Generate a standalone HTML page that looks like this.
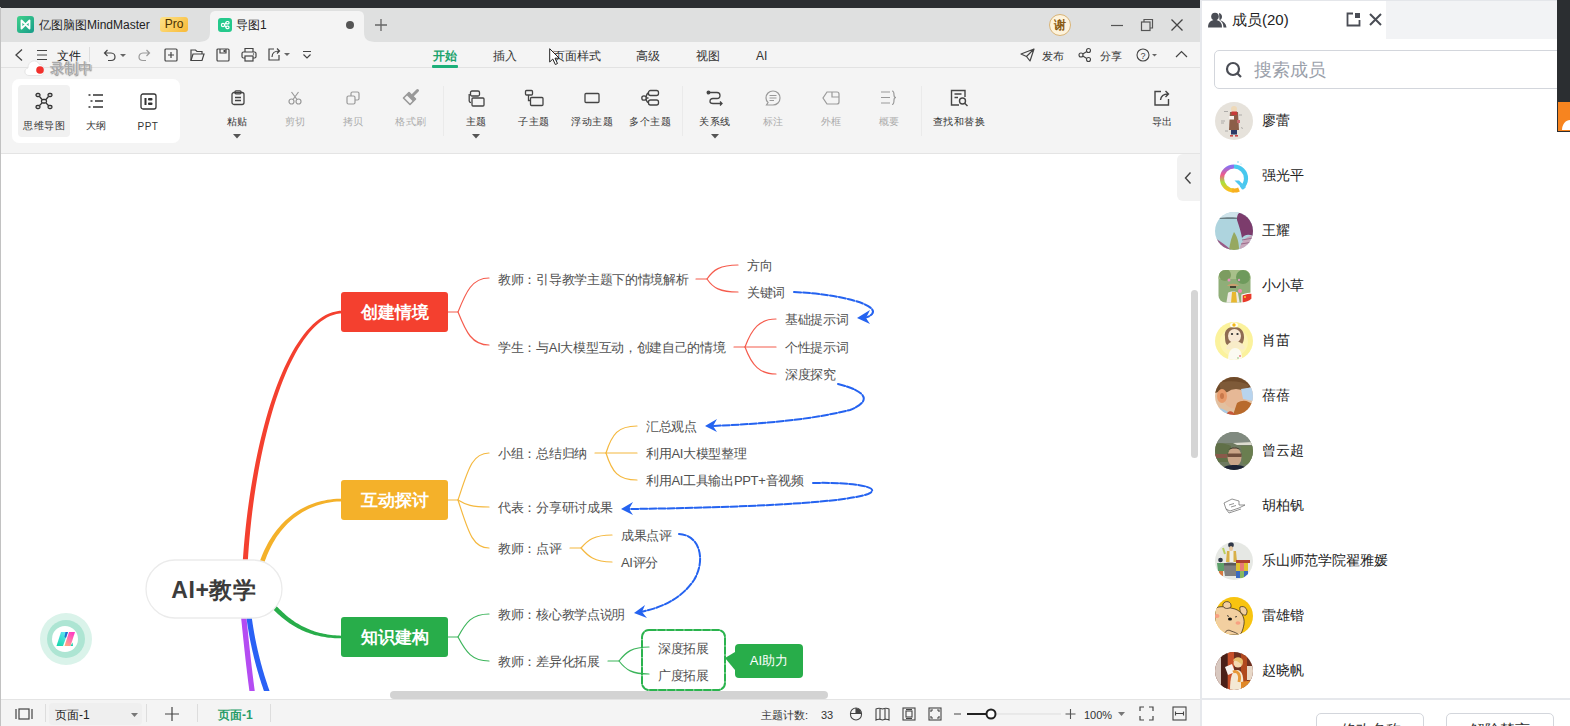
<!DOCTYPE html>
<html><head><meta charset="utf-8">
<style>
*{margin:0;padding:0;box-sizing:border-box}
html,body{width:1570px;height:726px;overflow:hidden;background:#fff;font-family:"Liberation Sans",sans-serif;color:#333}
.a{position:absolute;white-space:nowrap}
svg{position:absolute;overflow:visible}
#topbar{left:0;top:0;width:1200px;height:8px;background:#2b2e31}
#tabbar{left:0;top:8px;width:1200px;height:34px;background:#dfe0e0}
#tool1{left:0;top:42px;width:1200px;height:25px;background:#f4f4f4}
#ribbon{left:0;top:67px;width:1200px;height:86px;background:#f4f4f4;border-top:1px solid #e2e2e2}
#canvas{left:0;top:153px;width:1200px;height:546px;background:#fff;border-top:1px solid #e4e4e4}
#status{left:0;top:699px;width:1200px;height:27px;background:#f4f4f4;border-top:1px solid #e4e4e4}
#leftline{left:0;top:7px;width:1px;height:719px;background:#c2c2c2}
#panel{left:1200px;top:0;width:357px;height:726px;background:#fff;border-left:2px solid #e6e8ec}
.t12{font-size:12px}
.t11{font-size:11px}
.lbl{font-size:10px;letter-spacing:0.5px;color:#333;text-align:center;width:80px;margin-left:-40px}
.dis{color:#aaa}
.node{font-size:13px;letter-spacing:-0.3px;color:#505050}
.mem{font-size:14px;color:#222}
.av{width:38px;height:38px;border-radius:50%}
</style></head><body>
<div id="topbar" class="a"></div>
<div id="tabbar" class="a"></div>
<div id="tool1" class="a"></div>
<div id="ribbon" class="a"></div>
<div id="canvas" class="a"></div>

<svg id="mm" style="left:0;top:0" width="1200" height="690" viewBox="0 0 1200 690">
<defs><clipPath id="cc"><rect x="2" y="154" width="1188" height="537"/></clipPath></defs>
<g clip-path="url(#cc)" fill="none" stroke-linecap="round">
<!-- main branches -->
<path d="M246.60,589.07 L246.87,580.42 L247.23,571.77 L247.68,563.14 L248.22,554.53 L248.85,545.95 L249.57,537.41 L250.38,528.92 L251.27,520.49 L252.25,512.11 L253.31,503.81 L254.45,495.58 L255.67,487.44 L256.97,479.38 L258.35,471.43 L259.81,463.58 L261.34,455.85 L262.95,448.24 L264.64,440.76 L266.39,433.41 L268.22,426.21 L270.12,419.16 L272.09,412.27 L274.12,405.54 L276.22,398.99 L278.39,392.63 L280.62,386.45 L282.92,380.46 L285.28,374.69 L287.69,369.12 L290.17,363.77 L292.70,358.65 L295.29,353.77 L297.94,349.12 L300.63,344.73 L303.38,340.59 L306.18,336.72 L309.03,333.12 L311.92,329.80 L314.85,326.76 L317.83,324.02 L320.85,321.57 L323.90,319.44 L326.99,317.61 L330.12,316.09 L333.28,314.90 L336.48,314.03 L339.72,313.50 L343.00,313.30 L343.00,310.70 L339.44,310.86 L335.93,311.38 L332.45,312.27 L329.03,313.50 L325.65,315.07 L322.33,316.97 L319.07,319.18 L315.86,321.71 L312.71,324.54 L309.62,327.66 L306.58,331.07 L303.60,334.75 L300.68,338.70 L297.81,342.91 L295.01,347.37 L292.26,352.08 L289.58,357.03 L286.95,362.21 L284.39,367.62 L281.89,373.24 L279.45,379.08 L277.08,385.11 L274.77,391.34 L272.53,397.76 L270.35,404.35 L268.24,411.12 L266.21,418.06 L264.24,425.15 L262.35,432.40 L260.52,439.79 L258.78,447.31 L257.10,454.97 L255.50,462.74 L253.98,470.63 L252.54,478.63 L251.18,486.72 L249.89,494.91 L248.69,503.18 L247.57,511.53 L246.53,519.95 L245.58,528.43 L244.72,536.96 L243.94,545.55 L243.25,554.17 L242.65,562.83 L242.14,571.51 L241.73,580.21 L241.40,588.93 Z" fill="#f4402f" stroke="none"/>
<path d="M258.58,589.32 L258.95,586.32 L259.39,583.34 L259.88,580.39 L260.44,577.47 L261.05,574.58 L261.73,571.72 L262.47,568.89 L263.26,566.10 L264.12,563.34 L265.04,560.62 L266.02,557.94 L267.05,555.30 L268.15,552.70 L269.30,550.15 L270.52,547.65 L271.79,545.19 L273.12,542.78 L274.51,540.42 L275.96,538.12 L277.46,535.87 L279.03,533.67 L280.65,531.53 L282.33,529.45 L284.07,527.44 L285.86,525.48 L287.72,523.59 L289.63,521.76 L291.60,520.00 L293.62,518.30 L295.70,516.68 L297.84,515.13 L300.04,513.65 L302.29,512.25 L304.60,510.92 L306.97,509.67 L309.40,508.50 L311.88,507.41 L314.42,506.40 L317.02,505.48 L319.68,504.65 L322.39,503.90 L325.16,503.25 L327.99,502.68 L330.88,502.21 L333.82,501.84 L336.82,501.56 L339.88,501.38 L343.00,501.30 L343.00,498.70 L339.80,498.73 L336.64,498.85 L333.55,499.09 L330.50,499.42 L327.51,499.85 L324.57,500.38 L321.68,501.01 L318.85,501.73 L316.07,502.55 L313.35,503.45 L310.68,504.45 L308.07,505.53 L305.51,506.70 L303.01,507.96 L300.57,509.30 L298.18,510.72 L295.85,512.22 L293.58,513.80 L291.37,515.46 L289.21,517.19 L287.12,518.99 L285.08,520.86 L283.10,522.80 L281.18,524.81 L279.32,526.89 L277.52,529.03 L275.78,531.23 L274.10,533.49 L272.48,535.81 L270.92,538.19 L269.43,540.62 L267.99,543.11 L266.61,545.64 L265.30,548.23 L264.05,550.86 L262.85,553.54 L261.72,556.27 L260.66,559.04 L259.65,561.84 L258.71,564.69 L257.83,567.58 L257.01,570.50 L256.25,573.45 L255.56,576.44 L254.93,579.46 L254.36,582.51 L253.86,585.58 L253.42,588.68 Z" fill="#f4b12a" stroke="none"/>
<path d="M259.89,593.52 L261.37,595.51 L262.86,597.44 L264.36,599.33 L265.86,601.18 L267.37,602.97 L268.89,604.71 L270.41,606.41 L271.94,608.06 L273.48,609.66 L275.03,611.22 L276.59,612.73 L278.16,614.19 L279.74,615.61 L281.33,616.98 L282.93,618.30 L284.54,619.58 L286.15,620.81 L287.79,622.00 L289.43,623.15 L291.08,624.25 L292.75,625.30 L294.42,626.32 L296.11,627.29 L297.81,628.21 L299.53,629.09 L301.26,629.93 L303.00,630.73 L304.75,631.48 L306.52,632.20 L308.30,632.87 L310.09,633.50 L311.90,634.09 L313.73,634.64 L315.56,635.15 L317.42,635.62 L319.29,636.05 L321.17,636.44 L323.07,636.80 L324.99,637.11 L326.92,637.39 L328.87,637.63 L330.83,637.83 L332.81,638.00 L334.82,638.13 L336.83,638.23 L338.87,638.29 L340.93,638.31 L343.00,638.30 L343.00,635.70 L340.97,635.66 L338.96,635.58 L336.98,635.47 L335.01,635.32 L333.07,635.14 L331.14,634.92 L329.24,634.67 L327.36,634.39 L325.50,634.07 L323.66,633.71 L321.83,633.32 L320.03,632.89 L318.24,632.42 L316.47,631.92 L314.72,631.38 L312.99,630.80 L311.27,630.18 L309.57,629.53 L307.88,628.84 L306.22,628.11 L304.56,627.34 L302.92,626.53 L301.30,625.68 L299.69,624.79 L298.09,623.86 L296.50,622.89 L294.93,621.88 L293.37,620.83 L291.82,619.73 L290.28,618.60 L288.76,617.42 L287.24,616.20 L285.74,614.93 L284.24,613.62 L282.75,612.27 L281.28,610.87 L279.81,609.43 L278.35,607.94 L276.89,606.41 L275.45,604.83 L274.01,603.20 L272.58,601.53 L271.15,599.81 L269.73,598.04 L268.32,596.22 L266.91,594.36 L265.51,592.45 L264.11,590.48 Z" fill="#28ad4a" stroke="none"/>
<path d="M239.36,600.26 L239.61,602.75 L239.86,605.21 L240.10,607.65 L240.34,610.06 L240.58,612.46 L240.82,614.83 L241.06,617.17 L241.29,619.50 L241.53,621.81 L241.76,624.10 L241.99,626.37 L242.22,628.63 L242.45,630.87 L242.68,633.09 L242.91,635.30 L243.14,637.50 L243.37,639.68 L243.60,641.85 L243.83,644.01 L244.06,646.16 L244.29,648.30 L244.52,650.43 L244.76,652.55 L244.99,654.67 L245.23,656.78 L245.46,658.88 L245.70,660.98 L245.94,663.07 L246.18,665.16 L246.43,667.25 L246.68,669.34 L246.92,671.43 L247.18,673.51 L247.43,675.60 L247.69,677.69 L247.95,679.78 L248.21,681.88 L248.48,683.98 L248.75,686.08 L249.03,688.19 L249.30,690.31 L249.59,692.43 L249.87,694.56 L250.16,696.70 L250.46,698.86 L250.76,701.02 L251.07,703.19 L251.38,705.37 L256.62,704.63 L256.31,702.45 L256.01,700.28 L255.71,698.13 L255.42,695.99 L255.13,693.85 L254.84,691.73 L254.56,689.61 L254.28,687.50 L254.01,685.40 L253.74,683.30 L253.47,681.21 L253.21,679.12 L252.95,677.04 L252.69,674.96 L252.44,672.88 L252.19,670.80 L251.94,668.72 L251.69,666.63 L251.45,664.55 L251.21,662.47 L250.97,660.38 L250.73,658.28 L250.49,656.19 L250.26,654.08 L250.03,651.97 L249.79,649.85 L249.56,647.73 L249.33,645.59 L249.10,643.45 L248.87,641.29 L248.64,639.13 L248.41,636.95 L248.18,634.75 L247.96,632.55 L247.73,630.33 L247.50,628.09 L247.26,625.84 L247.03,623.57 L246.80,621.28 L246.57,618.97 L246.33,616.64 L246.10,614.30 L245.86,611.93 L245.62,609.54 L245.38,607.12 L245.13,604.69 L244.89,602.22 L244.64,599.74 Z" fill="#b44cf2" stroke="none"/>
<path d="M244.36,600.26 L244.62,602.77 L244.89,605.25 L245.16,607.71 L245.45,610.16 L245.75,612.58 L246.06,614.99 L246.38,617.38 L246.71,619.75 L247.06,622.10 L247.41,624.44 L247.78,626.77 L248.15,629.07 L248.54,631.37 L248.94,633.65 L249.35,635.91 L249.77,638.16 L250.20,640.40 L250.64,642.63 L251.10,644.84 L251.56,647.04 L252.04,649.23 L252.53,651.41 L253.04,653.58 L253.55,655.75 L254.07,657.90 L254.61,660.04 L255.16,662.18 L255.72,664.30 L256.29,666.42 L256.88,668.54 L257.48,670.64 L258.09,672.75 L258.71,674.84 L259.34,676.93 L259.99,679.02 L260.65,681.10 L261.32,683.18 L262.00,685.26 L262.70,687.33 L263.41,689.41 L264.13,691.48 L264.86,693.55 L265.61,695.62 L266.37,697.69 L267.14,699.75 L267.93,701.83 L268.72,703.90 L269.53,705.97 L274.47,704.03 L273.66,701.98 L272.88,699.93 L272.10,697.89 L271.34,695.85 L270.59,693.80 L269.85,691.76 L269.13,689.72 L268.42,687.68 L267.72,685.63 L267.03,683.59 L266.36,681.54 L265.70,679.49 L265.05,677.44 L264.41,675.38 L263.79,673.32 L263.17,671.25 L262.57,669.18 L261.98,667.11 L261.41,665.03 L260.84,662.94 L260.29,660.84 L259.75,658.74 L259.22,656.62 L258.70,654.50 L258.20,652.37 L257.70,650.24 L257.22,648.09 L256.75,645.93 L256.29,643.76 L255.84,641.57 L255.40,639.38 L254.97,637.17 L254.56,634.95 L254.15,632.72 L253.76,630.47 L253.38,628.21 L253.01,625.93 L252.65,623.64 L252.30,621.33 L251.96,619.00 L251.63,616.66 L251.32,614.30 L251.01,611.92 L250.71,609.52 L250.43,607.10 L250.15,604.67 L249.89,602.21 L249.64,599.74 Z" fill="#2a61f5" stroke="none"/>
<!-- red subbranches -->
<g stroke="#f4402f" stroke-width="1.2" opacity="0.85">
<path d="M447,312 L458,312 C466,292 472,278 489,278"/>
<path d="M458,312 C466,332 472,345 489,345"/>
<path d="M696,279 L707,279 C713,270 720,265 738,265"/>
<path d="M707,279 C713,288 720,292 738,292"/>
<path d="M734,347 L745,347 C752,328 760,319 776,319"/>
<path d="M745,347 L776,347"/>
<path d="M745,347 C752,366 760,374 776,374"/>
</g>
<g stroke="#f4b12a" stroke-width="1.2" opacity="0.9">
<path d="M447,500 L458,500 C468,470 472,453 489,453"/>
<path d="M458,500 C466,505 472,507 489,507"/>
<path d="M458,500 C468,530 472,548 489,548"/>
<path d="M595,453 L606,453 C612,434 618,426 637,426"/>
<path d="M606,453 L637,453"/>
<path d="M606,453 C612,472 618,480 637,480"/>
<path d="M570,548 L581,548 C588,540 594,535 612,535"/>
<path d="M581,548 C588,556 594,562 612,562"/>
</g>
<g stroke="#28ad4a" stroke-width="1.2" opacity="0.9">
<path d="M447,637 L458,637 C466,622 472,614 489,614"/>
<path d="M458,637 C466,652 472,661 489,661"/>
<path d="M608,661 L619,661 C626,652 632,647 649,647"/>
<path d="M619,661 C626,670 632,674 649,674"/>
</g>
<!-- boundary -->
<rect x="642" y="630" width="83" height="60" rx="7" stroke="#2bb34e" stroke-width="2" stroke-dasharray="7,2"/>
<!-- relationship lines -->
<g stroke="#2563f0" stroke-width="2" stroke-dasharray="7,2">
<path d="M794,292 C840,294 880,305 872,314 C868,318 864,318 862,318"/>
<path d="M838,384 C870,392 870,402 850,410 C810,420 760,424 712,426"/>
<path d="M813,483 C852,482 884,487 868,494 C840,504 720,508 628,509"/>
<path d="M679,534 C700,535 706,560 694,580 C682,598 662,608 640,612"/>
</g>
<g fill="#2563f0" stroke="none">
<path d="M857,318 L870,310 L866,318 L870,324 Z"/>
<path d="M705,426 L717,419 L713,426 L717,432 Z"/>
<path d="M621,509 L633,502 L629,509 L633,515 Z"/>
<path d="M634,613 L645,605 L642,612 L647,618 Z"/>
</g>
</g>
<!-- nodes -->
<rect x="146" y="560" width="136" height="58" rx="29" fill="#fff" stroke="#ebebeb" stroke-width="1.3"/>
<rect x="341" y="292" width="107" height="40" rx="3" fill="#f4402f"/>
<rect x="341" y="480" width="107" height="40" rx="3" fill="#f4b12a"/>
<rect x="341" y="617" width="107" height="40" rx="3" fill="#28ad4a"/>
<path d="M725,658 L735,652 L735,670 Z" fill="#28ad4a"/>
<rect x="735" y="644" width="68" height="34" rx="4" fill="#28ad4a"/>
</svg>
<div class="a" style="left:171.28px;width:85.42px;margin-left:0;text-align:justify;text-align-last:justify;top:576px;font-size:23px;letter-spacing:0.6px;font-weight:bold;color:#3c3c3c;line-height:28px">AI+教学</div>
<div class="a" style="left:360.50px;width:67.98px;margin-left:0;text-align:justify;text-align-last:justify;top:300px;font-size:17px;font-weight:bold;color:#fff;line-height:26px">创建情境</div>
<div class="a" style="left:360.50px;width:67.98px;margin-left:0;text-align:justify;text-align-last:justify;top:488px;font-size:17px;font-weight:bold;color:#fff;line-height:26px">互动探讨</div>
<div class="a" style="left:360.50px;width:67.98px;margin-left:0;text-align:justify;text-align-last:justify;top:625px;font-size:17px;font-weight:bold;color:#fff;line-height:26px">知识建构</div>
<div class="a" style="left:749.84px;width:38.28px;margin-left:0;text-align:justify;text-align-last:justify;top:651px;font-size:13px;color:#fff;line-height:20px">AI助力</div>
<div class="a node" style="left:498.00px;width:190.50px;margin-left:0;text-align:justify;text-align-last:justify;top:271px">教师：引导教学主题下的情境解析</div>
<div class="a node" style="left:498.00px;width:227.57px;margin-left:0;text-align:justify;text-align-last:justify;top:339px">学生：与AI大模型互动，创建自己的情境</div>
<div class="a node" style="left:747.00px;width:25.39px;margin-left:0;text-align:justify;text-align-last:justify;top:257px">方向</div>
<div class="a node" style="left:747.00px;width:38.09px;margin-left:0;text-align:justify;text-align-last:justify;top:284px">关键词</div>
<div class="a node" style="left:785.00px;width:63.50px;margin-left:0;text-align:justify;text-align-last:justify;top:311px">基础提示词</div>
<div class="a node" style="left:785.00px;width:63.50px;margin-left:0;text-align:justify;text-align-last:justify;top:339px">个性提示词</div>
<div class="a node" style="left:785.00px;width:50.79px;margin-left:0;text-align:justify;text-align-last:justify;top:366px">深度探究</div>
<div class="a node" style="left:498.00px;width:88.89px;margin-left:0;text-align:justify;text-align-last:justify;top:445px">小组：总结归纳</div>
<div class="a node" style="left:498.00px;width:114.29px;margin-left:0;text-align:justify;text-align-last:justify;top:499px">代表：分享研讨成果</div>
<div class="a node" style="left:498.00px;width:63.50px;margin-left:0;text-align:justify;text-align-last:justify;top:540px">教师：点评</div>
<div class="a node" style="left:646.00px;width:50.79px;margin-left:0;text-align:justify;text-align-last:justify;top:418px">汇总观点</div>
<div class="a node" style="left:646.00px;width:100.57px;margin-left:0;text-align:justify;text-align-last:justify;top:445px">利用AI大模型整理</div>
<div class="a node" style="left:646.00px;width:157.65px;margin-left:0;text-align:justify;text-align-last:justify;top:472px">利用AI工具输出PPT+音视频</div>
<div class="a node" style="left:621.00px;width:50.79px;margin-left:0;text-align:justify;text-align-last:justify;top:527px">成果点评</div>
<div class="a node" style="left:621.00px;width:37.07px;margin-left:0;text-align:justify;text-align-last:justify;top:554px">AI评分</div>
<div class="a node" style="left:498.00px;width:127.00px;margin-left:0;text-align:justify;text-align-last:justify;top:606px">教师：核心教学点说明</div>
<div class="a node" style="left:498.00px;width:101.59px;margin-left:0;text-align:justify;text-align-last:justify;top:653px">教师：差异化拓展</div>
<div class="a node" style="left:658.00px;width:50.79px;margin-left:0;text-align:justify;text-align-last:justify;top:640px">深度拓展</div>
<div class="a node" style="left:658.00px;width:50.79px;margin-left:0;text-align:justify;text-align-last:justify;top:667px">广度拓展</div>
<div id="status" class="a"></div>
<div id="leftline" class="a"></div>
<!-- TAB BAR -->
<div class="a" style="left:17px;top:16px;width:17px;height:17px;border-radius:3px;background:linear-gradient(135deg,#3fd18a,#179c8a)"></div>
<svg style="left:17px;top:16px" width="17" height="17"><path d="M4.5,4.5 L4.5,12.5 L12.5,4.5 L12.5,12.5 Z" fill="none" stroke="#fff" stroke-width="1.8" stroke-linejoin="round"/></svg>
<div class="a" style="left:39.00px;width:110.67px;margin-left:0;text-align:justify;text-align-last:justify;top:17px;font-size:12px;color:#222;line-height:16px">亿图脑图MindMaster</div>
<div class="a" style="left:160px;top:17px;width:28px;height:15px;border-radius:3px;background:linear-gradient(135deg,#fde38a,#f8b936);font-size:12px;color:#4a3000;text-align:center;line-height:15px">Pro</div>
<svg style="left:196px;top:11px" width="187" height="31"><path d="M0,31 C10,31 14,29 14,21 L14,6 C14,2 16,0 20,0 L162,0 C166,0 168,2 168,6 L168,21 C168,29 172,31 182,31 Z" fill="#f4f4f4"/></svg>
<div class="a" style="left:218px;top:18px;width:14px;height:14px;border-radius:3px;background:#25c98c"></div>
<svg style="left:218px;top:18px" width="14" height="14"><g fill="none" stroke="#fff" stroke-width="1.2"><circle cx="5" cy="7" r="1.6"/><rect x="8" y="3.5" width="3" height="2.4" rx="1"/><rect x="8" y="8.2" width="3" height="2.4" rx="1"/><path d="M6.5,7 L8,4.7 M6.5,7 L8,9.4"/></g></svg>
<div class="a" style="left:236.00px;width:30.67px;margin-left:0;text-align:justify;text-align-last:justify;top:17px;font-size:12px;color:#222;line-height:16px">导图1</div>
<div class="a" style="left:346px;top:21px;width:8px;height:8px;border-radius:50%;background:#555"></div>
<svg style="left:374px;top:18px" width="14" height="14"><path d="M7,1 V13 M1,7 H13" stroke="#666" stroke-width="1.3"/></svg>
<div class="a" style="left:1049px;top:14px;width:22px;height:22px;border-radius:50%;background:#fdf3dc;border:1px solid #d9b477;font-size:12px;font-weight:bold;color:#8a5a10;text-align:center;line-height:20px">谢</div>
<svg style="left:1110px;top:18px" width="14" height="14"><path d="M1,7.5 H13" stroke="#555" stroke-width="1.2"/></svg>
<svg style="left:1140px;top:18px" width="14" height="14"><g fill="none" stroke="#555" stroke-width="1.2"><rect x="1.5" y="4" width="8.5" height="8.5"/><path d="M4,4 V1.5 H12.5 V10 H10"/></g></svg>
<svg style="left:1170px;top:18px" width="14" height="14"><path d="M1.5,1.5 L12.5,12.5 M12.5,1.5 L1.5,12.5" stroke="#444" stroke-width="1.3"/></svg>

<!-- TOOLBAR ROW 1 -->
<svg style="left:13px;top:48px" width="12" height="14"><path d="M9,1.5 L3,7 L9,12.5" fill="none" stroke="#444" stroke-width="1.3"/></svg>
<svg style="left:36px;top:49px" width="12" height="12"><path d="M1,1.5 H11 M1,6 H11 M1,10.5 H11" stroke="#444" stroke-width="1.2"/></svg>
<div class="a" style="left:57.00px;width:23.98px;margin-left:0;text-align:justify;text-align-last:justify;top:48px;font-size:12px;color:#222;line-height:16px">文件</div>
<div class="a" style="left:89px;top:47px;width:1px;height:15px;background:#ddd"></div>
<svg style="left:102px;top:48px" width="30" height="14"><path d="M3,5 H9 C12,5 13,7.5 13,9 C13,11 11.5,12.5 9,12.5 H6 M5.5,2 L2.5,5 L5.5,8" fill="none" stroke="#444" stroke-width="1.2"/><path d="M18,6 L24,6 L21,9 Z" fill="#666"/></svg>
<svg style="left:138px;top:48px" width="14" height="14"><path d="M11,5 H5 C2,5 1,7.5 1,9 C1,11 2.5,12.5 5,12.5 H8 M8.5,2 L11.5,5 L8.5,8" fill="none" stroke="#999" stroke-width="1.2"/></svg>
<svg style="left:164px;top:48px" width="14" height="14"><g fill="none" stroke="#444" stroke-width="1.2"><rect x="1" y="1" width="12" height="12" rx="1"/><path d="M7,4 V10 M4,7 H10"/></g></svg>
<svg style="left:190px;top:48px" width="15" height="14"><g fill="none" stroke="#444" stroke-width="1.2"><path d="M1,12.5 V2 H5.5 L7,3.5 H12 V6"/><path d="M1,12.5 L3,6 H14 L12,12.5 Z"/></g></svg>
<svg style="left:216px;top:48px" width="14" height="14"><g fill="none" stroke="#444" stroke-width="1.2"><rect x="1" y="1" width="12" height="12" rx="1"/><path d="M4,1 V5 H10 V1"/></g><rect x="7.5" y="2" width="2" height="2" fill="#444"/></svg>
<svg style="left:241px;top:47px" width="16" height="15"><g fill="none" stroke="#444" stroke-width="1.2"><path d="M4,5 V1.5 H12 V5"/><path d="M4,11 H2.5 C1.5,11 1,10.5 1,9.5 V6.5 C1,5.5 1.5,5 2.5,5 H13.5 C14.5,5 15,5.5 15,6.5 V9.5 C15,10.5 14.5,11 13.5,11 H12"/><rect x="4" y="9" width="8" height="5"/></g><circle cx="12.5" cy="7" r="0.7" fill="#444"/></svg>
<svg style="left:267px;top:47px" width="26" height="15"><g fill="none" stroke="#444" stroke-width="1.2"><path d="M7,2 H2 V13 H12 V8"/><path d="M5,10 C5,6 8,4 12,4 M10,1.5 L12.5,4 L10,6.5"/></g><path d="M17,6 L23,6 L20,9 Z" fill="#666"/></svg>
<svg style="left:301px;top:49px" width="12" height="12"><path d="M2,2.5 H10 M2.5,5.5 L6,9 L9.5,5.5" fill="none" stroke="#444" stroke-width="1.2"/></svg>
<div class="a" style="left:433.00px;width:23.98px;margin-left:0;text-align:justify;text-align-last:justify;top:48px;font-size:12px;color:#1aa36c;font-weight:bold;line-height:16px">开始</div>
<div class="a" style="left:432px;top:65px;width:26px;height:3px;border-radius:1px;background:#1db07a"></div>
<div class="a" style="left:493.00px;width:23.98px;margin-left:0;text-align:justify;text-align-last:justify;top:48px;font-size:12px;color:#333;line-height:16px">插入</div>
<div class="a" style="left:553.00px;width:47.98px;margin-left:0;text-align:justify;text-align-last:justify;top:48px;font-size:12px;color:#333;line-height:16px">页面样式</div>
<svg style="left:549px;top:48px" width="12" height="19"><path d="M0.7,0.7 L0.7,14 L3.8,11 L6.3,16.5 L8.5,15.5 L6,10.2 L10.2,10.2 Z" fill="#fff" stroke="#222" stroke-width="1" stroke-linejoin="round"/></svg>
<div class="a" style="left:636.00px;width:23.98px;margin-left:0;text-align:justify;text-align-last:justify;top:48px;font-size:12px;color:#333;line-height:16px">高级</div>
<div class="a" style="left:696.00px;width:23.98px;margin-left:0;text-align:justify;text-align-last:justify;top:48px;font-size:12px;color:#333;line-height:16px">视图</div>
<div class="a" style="left:756px;top:48px;font-size:12px;color:#333;line-height:16px">AI</div>
<svg style="left:1020px;top:48px" width="15" height="14"><path d="M1,6 L14,1 L10,13 L6.5,8.5 Z M6.5,8.5 L14,1" fill="none" stroke="#444" stroke-width="1.2" stroke-linejoin="round"/></svg>
<div class="a" style="left:1042.00px;width:21.98px;margin-left:0;text-align:justify;text-align-last:justify;top:48px;font-size:11px;color:#333;line-height:16px">发布</div>
<svg style="left:1078px;top:48px" width="14" height="14"><g fill="none" stroke="#444" stroke-width="1.1"><circle cx="3" cy="7" r="2"/><circle cx="10.5" cy="2.5" r="2"/><circle cx="10.5" cy="11.5" r="2"/><path d="M4.8,6 L8.8,3.5 M4.8,8 L8.8,10.5"/></g></svg>
<div class="a" style="left:1100.00px;width:21.98px;margin-left:0;text-align:justify;text-align-last:justify;top:48px;font-size:11px;color:#333;line-height:16px">分享</div>
<svg style="left:1136px;top:48px" width="26" height="14"><circle cx="7" cy="7" r="6" fill="none" stroke="#444" stroke-width="1.1"/><text x="7" y="10.5" font-size="9" text-anchor="middle" fill="#444" font-family="Liberation Sans">?</text><path d="M16,6 L21,6 L18.5,8.5 Z" fill="#666"/></svg>
<svg style="left:1175px;top:49px" width="13" height="10"><path d="M1,8 L6.5,2.5 L12,8" fill="none" stroke="#444" stroke-width="1.2"/></svg>


<!-- RIBBON -->
<div class="a" style="left:12px;top:79px;width:168px;height:64px;border-radius:7px;background:#fff"></div>
<div class="a" style="left:18px;top:85px;width:52px;height:52px;border-radius:4px;background:#f1f1f1"></div>
<svg style="left:35px;top:92px" width="18" height="18"><g fill="none" stroke="#333" stroke-width="1.3"><rect x="1" y="1.5" width="4" height="3" rx="1.5"/><rect x="13" y="1.5" width="4" height="3" rx="1.5"/><rect x="1" y="13.5" width="4" height="3" rx="1.5"/><rect x="13" y="13.5" width="4" height="3" rx="1.5"/><rect x="6.5" y="7.5" width="5" height="3.5" rx="1.5"/><path d="M4.5,4.5 L7,7.5 M13.5,4.5 L11,7.5 M4.5,13.5 L7,11 M13.5,13.5 L11,11"/></g></svg>
<div class="a lbl" style="left:23.00px;width:41.98px;margin-left:0;text-align:justify;text-align-last:justify;top:119px">思维导图</div>
<svg style="left:88px;top:94px" width="16" height="14"><g stroke="#333" stroke-width="1.3"><path d="M0.5,1 H2.5 M5,1 H15 M2.5,7 H4.5 M7,7 H15 M0.5,13 H2.5 M5,13 H15"/></g></svg>
<div class="a lbl" style="left:85.50px;width:20.98px;margin-left:0;text-align:justify;text-align-last:justify;top:119px">大纲</div>
<svg style="left:140px;top:93px" width="17" height="17"><g fill="none" stroke="#333" stroke-width="1.3"><rect x="1" y="1" width="15" height="15" rx="2"/></g><g fill="#333"><rect x="4.5" y="5" width="2" height="7"/><rect x="8" y="5" width="4.5" height="2.5" rx="1"/><rect x="8" y="9.5" width="4.5" height="2.5" rx="1"/></g></svg>
<div class="a lbl" style="left:148px;top:121px">PPT</div>

<svg style="left:231px;top:90px" width="14" height="15"><g fill="none" stroke="#444" stroke-width="1.3"><rect x="1" y="2.5" width="12" height="12" rx="2"/><rect x="4" y="0.8" width="6" height="3" rx="1"/><path d="M4,7.5 H10 M4,10.5 H10"/></g></svg>
<div class="a lbl" style="left:226.50px;width:20.98px;margin-left:0;text-align:justify;text-align-last:justify;top:115px">粘贴</div>
<svg style="left:233px;top:134px" width="8" height="5"><path d="M0,0 H8 L4,4.5 Z" fill="#555"/></svg>
<svg style="left:288px;top:91px" width="14" height="14"><g fill="none" stroke="#999" stroke-width="1.2"><circle cx="3.5" cy="10.5" r="2.5"/><circle cx="10.5" cy="10.5" r="2.5"/><path d="M5,8.5 L10.5,1 M9,8.5 L3.5,1"/></g></svg>
<div class="a lbl dis" style="left:284.50px;width:20.98px;margin-left:0;text-align:justify;text-align-last:justify;top:115px">剪切</div>
<svg style="left:346px;top:91px" width="14" height="14"><g fill="none" stroke="#999" stroke-width="1.2"><rect x="1" y="5" width="8" height="8" rx="1.5"/><path d="M5,5 V2.5 C5,1.5 5.5,1 6.5,1 H11.5 C12.5,1 13,1.5 13,2.5 V7.5 C13,8.5 12.5,9 11.5,9 H9"/></g></svg>
<div class="a lbl dis" style="left:342.50px;width:20.98px;margin-left:0;text-align:justify;text-align-last:justify;top:115px">拷贝</div>
<svg style="left:402px;top:89px" width="18" height="17"><path d="M1.5,9 L7,3.5 L13.5,10 L8,15.5 Z" fill="none" stroke="#999" stroke-width="1.6" stroke-linejoin="round"/><path d="M4.5,6 L7,3.5 L13.5,10 L11,12.5 Z" fill="#999"/><path d="M10.5,6.5 L15.5,1.5" stroke="#999" stroke-width="3" stroke-linecap="round"/></svg>
<div class="a lbl dis" style="left:395.25px;width:31.48px;margin-left:0;text-align:justify;text-align-last:justify;top:115px">格式刷</div>
<div class="a" style="left:443px;top:86px;width:1px;height:50px;background:#eaeaea"></div>

<svg style="left:468px;top:90px" width="18" height="17"><g fill="none" stroke="#444" stroke-width="1.3"><rect x="2.5" y="1" width="9" height="5" rx="1.5"/><path d="M1.2,4 V11 C1.2,12 1.6,12.5 3,12.5"/><rect x="4" y="8" width="12" height="8" rx="1"/></g></svg>
<div class="a lbl" style="left:465.50px;width:20.98px;margin-left:0;text-align:justify;text-align-last:justify;top:115px">主题</div>
<svg style="left:472px;top:134px" width="8" height="5"><path d="M0,0 H8 L4,4.5 Z" fill="#555"/></svg>
<svg style="left:524px;top:89px" width="20" height="18"><g fill="none" stroke="#444" stroke-width="1.3"><rect x="1.5" y="1.5" width="7" height="4.5" rx="1"/><path d="M4.5,6 V11.5 H6.5"/><rect x="6.5" y="8.5" width="12.5" height="8" rx="1"/></g></svg>
<div class="a lbl" style="left:518.25px;width:31.48px;margin-left:0;text-align:justify;text-align-last:justify;top:115px">子主题</div>
<svg style="left:584px;top:92px" width="16" height="12"><rect x="1" y="1.5" width="14" height="9" rx="1" fill="none" stroke="#444" stroke-width="1.3"/></svg>
<div class="a lbl" style="left:571.00px;width:41.98px;margin-left:0;text-align:justify;text-align-last:justify;top:115px">浮动主题</div>
<svg style="left:640px;top:89px" width="20" height="18"><g fill="none" stroke="#444" stroke-width="1.3"><circle cx="4" cy="9" r="2.2"/><rect x="8.5" y="1.5" width="10" height="5" rx="2"/><rect x="8.5" y="11" width="10" height="5" rx="2"/><path d="M6.2,9 H8.5 M8.5,4 C7,4 6.5,6 6,8 M8.5,13.5 C7,13.5 6.5,12 6,10"/></g></svg>
<div class="a lbl" style="left:629.00px;width:41.98px;margin-left:0;text-align:justify;text-align-last:justify;top:115px">多个主题</div>
<div class="a" style="left:682px;top:86px;width:1px;height:50px;background:#eaeaea"></div>

<svg style="left:706px;top:90px" width="18" height="15"><g fill="none" stroke="#444" stroke-width="1.3"><circle cx="2.5" cy="2.5" r="1.3" fill="#444"/><path d="M2.5,2.5 H11 C13,2.5 14,4 14,5.5 C14,7 13,8.5 11,8.5 H7 C5,8.5 4,10 4,11.5 C4,13 5,13.5 7,13.5 H16 M14,11.5 L16,13.5 L14,15.5"/></g></svg>
<div class="a lbl" style="left:699.25px;width:31.48px;margin-left:0;text-align:justify;text-align-last:justify;top:115px">关系线</div>
<svg style="left:711px;top:134px" width="8" height="5"><path d="M0,0 H8 L4,4.5 Z" fill="#555"/></svg>
<svg style="left:765px;top:90px" width="16" height="16"><g fill="none" stroke="#999" stroke-width="1.2"><path d="M8,1 C12,1 15,4 15,8 C15,12 12,15 8,15 H1.5 L3,12.5 C1.8,11.3 1,9.7 1,8 C1,4 4,1 8,1 Z"/><path d="M4.5,5.5 H11.5 M4.5,8 H11.5 M4.5,10.5 H9"/></g></svg>
<div class="a lbl dis" style="left:762.50px;width:20.98px;margin-left:0;text-align:justify;text-align-last:justify;top:115px">标注</div>
<svg style="left:822px;top:91px" width="18" height="14"><g fill="none" stroke="#999" stroke-width="1.2"><path d="M5,1 H15 C16,1 17,2 17,3 V11 C17,12 16,13 15,13 H5 L1,7 Z"/><path d="M10,1 V6 H17"/></g></svg>
<div class="a lbl dis" style="left:820.50px;width:20.98px;margin-left:0;text-align:justify;text-align-last:justify;top:115px">外框</div>
<svg style="left:880px;top:90px" width="18" height="16"><g fill="none" stroke="#999" stroke-width="1.2"><path d="M1,2 H10 M1,7.5 H10 M1,13 H10 M12,1 C14,1 14,3 14,5 C14,7 15,7.5 16,7.5 C15,7.5 14,8 14,10 C14,12 14,14.5 12,14.5"/></g></svg>
<div class="a lbl dis" style="left:878.50px;width:20.98px;margin-left:0;text-align:justify;text-align-last:justify;top:115px">概要</div>
<div class="a" style="left:921px;top:86px;width:1px;height:50px;background:#eaeaea"></div>

<svg style="left:950px;top:89px" width="19" height="18"><g fill="none" stroke="#444" stroke-width="1.4"><path d="M9,16 H1.5 V1.5 H15 V8"/><path d="M4.5,5 H11.5 M4.5,8.5 H8"/><circle cx="12.5" cy="12" r="3"/><path d="M14.7,14.2 L17.5,17"/></g></svg>
<div class="a lbl" style="left:932.75px;width:52.48px;margin-left:0;text-align:justify;text-align-last:justify;top:115px">查找和替换</div>
<svg style="left:1153px;top:89px" width="18" height="17"><g fill="none" stroke="#444" stroke-width="1.4"><path d="M8,2.5 H2 V16 H15.5 V10"/><path d="M7.5,11 C8,7 10.5,5 15,5 M12.5,2 L15.5,5 L12.5,8"/></g></svg>
<div class="a lbl" style="left:1151.50px;width:20.98px;margin-left:0;text-align:justify;text-align-last:justify;top:115px">导出</div>
<!-- recording overlay -->
<svg style="left:22px;top:56px" width="26" height="22"><path d="M7,19.5 C2,19.5 1.5,13 6,12 C5.5,5 14.5,2 17.5,8.5 C21.5,8.5 23,13 20.5,15.5 C22,18 20.5,19.5 18.5,19.5 Z" fill="#fff" stroke="#e0e0e0" stroke-width="0.8"/><circle cx="18" cy="14" r="3.8" fill="#f2302c"/></svg>
<div class="a" style="left:50.00px;width:41.98px;margin-left:0;text-align:justify;text-align-last:justify;top:60px;font-size:14px;font-weight:bold;color:#a8a8a8;line-height:16px;text-shadow:0 0 1px #fff,0 0 2px #fff,1px 1px 1px #777">录制中</div>

<div id="panel" class="a"></div>

<!-- canvas extras -->
<div class="a" style="left:1177px;top:154px;width:23px;height:47px;background:#f2f2f2;border-radius:6px 0 0 6px"></div>
<svg style="left:1183px;top:171px" width="10" height="14"><path d="M7.5,1.5 L2.5,7 L7.5,12.5" fill="none" stroke="#444" stroke-width="1.4"/></svg>
<div class="a" style="left:1191px;top:290px;width:7px;height:168px;border-radius:4px;background:#d5d5d5"></div>
<div class="a" style="left:390px;top:691px;width:438px;height:8px;border-radius:4px;background:#d3d3d3"></div>
<div class="a" style="left:39.5px;top:612.5px;width:52px;height:52px;border-radius:50%;background:#daf3ea"></div>
<div class="a" style="left:46.5px;top:619.5px;width:38px;height:38px;border-radius:50%;background:#ade5d3"></div>
<div class="a" style="left:52px;top:626px;width:26px;height:26px;border-radius:50%;background:#fff"></div>
<svg style="left:52px;top:626px" width="26" height="26"><defs><linearGradient id="g1" x1="0" y1="1" x2="0.6" y2="0"><stop offset="0" stop-color="#12d6a6"/><stop offset="1" stop-color="#5de3f0"/></linearGradient><linearGradient id="g2" x1="0" y1="1" x2="0.6" y2="0"><stop offset="0" stop-color="#ffb27a"/><stop offset="0.6" stop-color="#ff6fae"/><stop offset="1" stop-color="#ff40c0"/></linearGradient></defs><path d="M4.5,20 L9,6 L16,6 L11,20 Z" fill="url(#g1)"/><path d="M12.5,20 L17,6 L23,6 L18.5,20 Z" fill="url(#g2)"/><path d="M13.5,6 L16,6 L14,12 L12.5,11 Z" fill="#1e6fd0"/><path d="M18.5,20 L20.5,16.5 L21,20 Z" fill="#1ad0b0"/></svg>

<!-- STATUS BAR -->
<svg style="left:15px;top:708px" width="18" height="12"><g fill="none" stroke="#444" stroke-width="1.2"><path d="M1,1 V11 M17,1 V11"/><rect x="4" y="1" width="10" height="10"/></g></svg>
<div class="a" style="left:45px;top:704px;width:1px;height:18px;background:#ddd"></div>
<div class="a" style="left:49px;top:703px;width:93px;height:22px;border-radius:4px;background:#efefef"></div>
<div class="a" style="left:55.00px;width:34.65px;margin-left:0;text-align:justify;text-align-last:justify;top:707px;font-size:12px;color:#222;line-height:16px">页面-1</div>
<svg style="left:131px;top:713px" width="7" height="4"><path d="M0,0 H7 L3.5,4 Z" fill="#777"/></svg>
<div class="a" style="left:146px;top:704px;width:1px;height:18px;background:#ddd"></div>
<svg style="left:165px;top:707px" width="14" height="14"><path d="M7,0 V14 M0,7 H14" stroke="#444" stroke-width="1.2"/></svg>
<div class="a" style="left:197px;top:704px;width:1px;height:18px;background:#ddd"></div>
<div class="a" style="left:218.00px;width:34.65px;margin-left:0;text-align:justify;text-align-last:justify;top:707px;font-size:12px;color:#2a9d6a;font-weight:bold;line-height:16px">页面-1</div>
<div class="a" style="left:270px;top:704px;width:1px;height:18px;background:#ddd"></div>
<div class="a" style="left:761.00px;width:47.04px;margin-left:0;text-align:justify;text-align-last:justify;top:707px;font-size:11px;color:#333;line-height:16px">主题计数:</div>
<div class="a" style="left:821px;top:707px;font-size:11px;color:#333;line-height:16px">33</div>
<svg style="left:849px;top:707px" width="14" height="14"><g fill="none" stroke="#444" stroke-width="1.1"><rect x="1.5" y="1" width="11" height="12" rx="5.5"/><path d="M1.5,6.5 H12.5 M7,1 V6.5"/></g><path d="M7,1.5 C10,1.5 12,3 12,6.5 H7 Z" fill="#444"/></svg>
<svg style="left:875px;top:707px" width="15" height="14"><g fill="none" stroke="#444" stroke-width="1.1"><path d="M1,2 C3,1 5,1 7.5,2 C10,1 12,1 14,2 V13 C12,12 10,12 7.5,13 C5,12 3,12 1,13 Z M5,1.5 V12.5 M10,1.5 V12.5"/></g></svg>
<svg style="left:902px;top:707px" width="14" height="14"><g fill="none" stroke="#444" stroke-width="1.1"><rect x="1" y="1" width="12" height="12"/><rect x="4" y="4" width="6" height="6"/><path d="M4,2.5 H10 M4,11.5 H10"/></g></svg>
<svg style="left:928px;top:707px" width="14" height="14"><g fill="none" stroke="#444" stroke-width="1.1"><rect x="1" y="1" width="12" height="12"/><path d="M3,5 V3 H5 M9,3 H11 V5 M11,9 V11 H9 M5,11 H3 V9"/></g></svg>
<svg style="left:953px;top:707px" width="110" height="14"><path d="M1,7 H8" stroke="#555" stroke-width="1.1"/><path d="M14,7 H34" stroke="#222" stroke-width="2"/><path d="M44,7 H108" stroke="#ddd" stroke-width="1"/><circle cx="38" cy="7" r="4.5" fill="#fff" stroke="#222" stroke-width="2"/></svg>
<svg style="left:1064px;top:707px" width="13" height="14"><path d="M6.5,2 V12 M1.5,7 H11.5" stroke="#555" stroke-width="1.1"/></svg>
<div class="a" style="left:1084px;top:707px;font-size:11px;color:#333;line-height:16px">100%</div>
<svg style="left:1118px;top:712px" width="7" height="5"><path d="M0,0 H7 L3.5,4 Z" fill="#777"/></svg>
<svg style="left:1139px;top:706px" width="15" height="15"><g fill="none" stroke="#444" stroke-width="1.2"><path d="M1,5 V1 H5 M10,1 H14 V5 M14,10 V14 H10 M5,14 H1 V10"/></g></svg>
<svg style="left:1172px;top:706px" width="15" height="15"><g fill="none" stroke="#444" stroke-width="1.1"><rect x="1" y="1" width="13" height="13"/><path d="M3.5,7.5 H11.5 M3.5,5.5 V9.5 M11.5,5.5 V9.5"/></g></svg>

<!-- PANEL -->
<div class="a" style="left:1202px;top:0;width:355px;height:1px;background:#e4e6ea"></div>
<div class="a" style="left:1386px;top:1px;width:171px;height:38px;background:#f2f3f5"></div>
<svg style="left:1208px;top:12px" width="19" height="16"><g fill="#4a4d55"><circle cx="7" cy="4.5" r="3.8"/><path d="M0,15.5 C0,10 3,8 7,8 C11,8 14,10 14,15.5 Z"/><path d="M11,1 C13,1.5 14,3 14,4.8 C14,6.5 13,7.8 11.5,8.3 C15,9 18,11 18.5,15.5 H15.5 C15.3,11 13.5,9.3 11.5,8.3 Z"/></g></svg>
<div class="a" style="left:1232.00px;width:56.67px;margin-left:0;text-align:justify;text-align-last:justify;top:10px;font-size:15px;color:#222;line-height:20px">成员(20)</div>
<svg style="left:1346px;top:12px" width="15" height="15"><g fill="none" stroke="#4a4d55" stroke-width="1.8"><path d="M7,1.5 H1.5 V13.5 H13.5 V8"/></g><rect x="9" y="1" width="5" height="5" fill="#4a4d55"/></svg>
<svg style="left:1368px;top:12px" width="15" height="15"><path d="M2,2 L13,13 M13,2 L2,13" stroke="#4a4d55" stroke-width="2"/></svg>
<div class="a" style="left:1214px;top:50px;width:350px;height:39px;border:1px solid #d3d6dc;border-radius:5px;background:#fff"></div>
<svg style="left:1225px;top:61px" width="18" height="18"><g fill="none" stroke="#4a4d55" stroke-width="2.2"><circle cx="8" cy="8" r="6"/><path d="M12.5,12.5 L16,16"/></g></svg>
<div class="a" style="left:1254.00px;width:71.98px;margin-left:0;text-align:justify;text-align-last:justify;top:59px;font-size:18px;color:#9aa0aa;line-height:22px">搜索成员</div>
<div class="a" style="left:1202px;top:698px;width:368px;height:2px;background:#e6e8ec"></div>
<div class="a" style="left:1316px;top:713px;width:108px;height:30px;border:1px solid #d3d6dc;border-radius:5px;background:#fff"></div>
<div class="a" style="left:1446px;top:713px;width:108px;height:30px;border:1px solid #d3d6dc;border-radius:5px;background:#fff"></div>
<div class="a" style="left:1341.00px;width:59.98px;margin-left:0;text-align:justify;text-align-last:justify;top:721px;font-size:15px;color:#333;line-height:18px">修改名称</div>
<div class="a" style="left:1470.00px;width:59.98px;margin-left:0;text-align:justify;text-align-last:justify;top:721px;font-size:15px;color:#333;line-height:18px">解除禁言</div>
<div class="a mem" style="left:1262.00px;width:27.98px;margin-left:0;text-align:justify;text-align-last:justify;top:111px;line-height:18px">廖蕾</div>
<div class="a mem" style="left:1262.00px;width:41.98px;margin-left:0;text-align:justify;text-align-last:justify;top:166px;line-height:18px">强光平</div>
<div class="a mem" style="left:1262.00px;width:27.98px;margin-left:0;text-align:justify;text-align-last:justify;top:221px;line-height:18px">王耀</div>
<div class="a mem" style="left:1262.00px;width:41.98px;margin-left:0;text-align:justify;text-align-last:justify;top:276px;line-height:18px">小小草</div>
<div class="a mem" style="left:1262.00px;width:27.98px;margin-left:0;text-align:justify;text-align-last:justify;top:331px;line-height:18px">肖苗</div>
<div class="a mem" style="left:1262.00px;width:27.98px;margin-left:0;text-align:justify;text-align-last:justify;top:386px;line-height:18px">蓓蓓</div>
<div class="a mem" style="left:1262.00px;width:41.98px;margin-left:0;text-align:justify;text-align-last:justify;top:441px;line-height:18px">曾云超</div>
<div class="a mem" style="left:1262.00px;width:41.98px;margin-left:0;text-align:justify;text-align-last:justify;top:496px;line-height:18px">胡柏钒</div>
<div class="a mem" style="left:1262.00px;width:125.98px;margin-left:0;text-align:justify;text-align-last:justify;top:551px;line-height:18px">乐山师范学院翟雅媛</div>
<div class="a mem" style="left:1262.00px;width:41.98px;margin-left:0;text-align:justify;text-align-last:justify;top:606px;line-height:18px">雷雄锴</div>
<div class="a mem" style="left:1262.00px;width:41.98px;margin-left:0;text-align:justify;text-align-last:justify;top:661px;line-height:18px">赵晓帆</div>
<svg style="left:1215px;top:102px" width="38" height="38" viewBox="0 0 38 38"><defs><clipPath id="avc120"><circle cx="19" cy="19" r="19"/></clipPath></defs><g clip-path="url(#avc120)"><rect width="38" height="38" fill="#e6e2db"/>
<circle cx="19" cy="7" r="3" fill="#efd9b8"/>
<path d="M15,10 L23,10 L24,28 L14,28 Z" fill="#8c5e48"/>
<path d="M16.5,9.5 H22 V13 H16.5 Z" fill="#c83a38"/>
<rect x="14" y="14" width="5" height="3.5" fill="#f6f2ee"/>
<rect x="22" y="18" width="3" height="3" fill="#c86a70"/>
<rect x="16" y="28" width="6" height="4.5" fill="#2c3a66"/>
<rect x="15" y="33" width="3" height="1.6" fill="#c84848"/><rect x="20" y="33" width="3" height="1.6" fill="#c84848"/>
<path d="M6,19 H10 M6,21 H9 M9,9.5 H13 M24,13 H27 M26,25.5 L28,26.5 M10,29 H13" stroke="#777" stroke-width="0.5"/></g></svg>
<svg style="left:1215px;top:157px" width="38" height="38" viewBox="0 0 38 38"><defs><linearGradient id="qg1" x1="0" y1="0" x2="0" y2="1"><stop offset="0" stop-color="#8a70f0"/><stop offset="0.35" stop-color="#f05a8a"/><stop offset="0.65" stop-color="#a8e040"/><stop offset="1" stop-color="#f8c020"/></linearGradient></defs>
<path d="M19,9.5 A12,12 0 0 0 19,33.5" fill="none" stroke="url(#qg1)" stroke-width="4.2"/>
<path d="M19,9.5 A12,12 0 0 1 31,21.5 A12,12 0 0 1 26,31" fill="none" stroke="#48c8ee" stroke-width="4.2"/>
<path d="M17,33.3 A12,12 0 0 0 24,32.5" fill="none" stroke="#f8b020" stroke-width="4.2"/>
<path d="M19.5,23.5 L24,23.5 L31,30 L28.5,32.5 Z" fill="#50c8f0"/>
<circle cx="23" cy="5" r="0.8" fill="#70d0e8"/><circle cx="26" cy="7" r="0.6" fill="#90d8f0"/></svg>
<svg style="left:1215px;top:212px" width="38" height="38" viewBox="0 0 38 38"><defs><clipPath id="avc230"><circle cx="19" cy="19" r="19"/></clipPath></defs><g clip-path="url(#avc230)"><rect width="38" height="38" fill="#aed4de"/>
<rect width="38" height="6" fill="#cfe3ea"/>
<path d="M4,6 C10,5 20,5 26,6 L26,7 L4,7 Z" fill="#6a7e84"/>
<path d="M24,1 C31,0 38,6 38,14 V24 C34,22 30,22 27,26 C26,20 24,14 22,8 C22,5 22,3 24,1 Z" fill="#7c3c6c"/>
<path d="M14,38 C15,30 17,24 19,20 C22,24 24,30 24,38 Z" fill="#96a860"/>
<path d="M0,26 C6,30 12,34 16,38 H0 Z" fill="#9a5a86"/>
<path d="M24,38 C26,30 30,25 38,23 V38 Z" fill="#c8a8bc"/>
<path d="M27,28 L38,26 M26,32 L38,30" stroke="#9a6a8a" stroke-width="1"/></g></svg>
<svg style="left:1215px;top:267px" width="38" height="38" viewBox="0 0 38 38"><defs><clipPath id="avc285"><rect x="3.5" y="3" width="32" height="32.5" rx="7"/></clipPath></defs><g clip-path="url(#avc285)"><rect width="38" height="38" fill="#8fae78"/>
<rect y="0" width="38" height="12" fill="#a8c08a"/>
<circle cx="10" cy="8" r="6" fill="#7c9c60"/><circle cx="28" cy="10" r="7" fill="#6e9a5c"/>
<circle cx="14" cy="13" r="1.5" fill="#e890c0"/><circle cx="24" cy="13" r="1.2" fill="#d8a0c0"/>
<path d="M12,19 C14,16 22,16 24,19 Z" fill="#c8a070"/><rect x="15" y="19" width="6" height="2" fill="#443"/>
<path d="M11,38 L13,26 C14,24 22,24 23,26 L25,38 Z" fill="#eeeae4"/>
<path d="M17,25 L21,25 L22,36 L16,36 Z" fill="#e8b830"/>
<circle cx="25" cy="24" r="2" fill="#f08ab0"/><path d="M27,29 C28,26 32,26 33,29 L32,34 H28 Z" fill="#e8eef0"/></g></svg>
<svg style="left:1241px;top:292px" width="12" height="12"><path d="M1,3 C4,2 8,1 11,1 L11,7 C9,9 6,11 1,11 Z" fill="#e83a2a" stroke="#fff" stroke-width="1.2"/><circle cx="4" cy="5" r="1" fill="#f8d030"/></svg>
<svg style="left:1215px;top:322px" width="38" height="38" viewBox="0 0 38 38"><defs><clipPath id="avc340"><circle cx="19" cy="19" r="19"/></clipPath></defs><g clip-path="url(#avc340)"><rect width="38" height="38" fill="#fbf29c"/>
<circle cx="19" cy="20" r="14" fill="#fcf4b4"/>
<path d="M10,15 C9,8 13,5 19,5 C25,5 29,8 29,15 C29,20 27,23 25,23 H13 C11,23 10,20 10,15 Z" fill="#8e6c52"/>
<ellipse cx="19.5" cy="14" rx="6.5" ry="7" fill="#f8e8d4"/>
<ellipse cx="17" cy="12" rx="1.2" ry="1" fill="#333"/><ellipse cx="22.5" cy="12" rx="1.2" ry="1" fill="#333"/>
<path d="M11,27 C12,21 17,19 20,19 C24,19 29,22 30,26 L27,28 C24,26 20,24 16,28 Z" fill="#f8ecc8"/>
<path d="M13,38 C13,30 16,26 20,26 C25,26 27,30 27,38 Z" fill="#fbfaf2"/>
<circle cx="25" cy="34" r="1" fill="#e88a8a"/><circle cx="23" cy="36" r="0.8" fill="#8cc070"/>
<ellipse cx="19" cy="3" rx="4" ry="2.5" fill="#fffef4"/><circle cx="19" cy="3" r="1.7" fill="#f5b818"/></g></svg>
<svg style="left:1215px;top:377px" width="38" height="38" viewBox="0 0 38 38"><defs><clipPath id="avc395"><circle cx="19" cy="19" r="19"/></clipPath></defs><g clip-path="url(#avc395)"><rect width="38" height="38" fill="#e2c0a0"/>
<path d="M0,0 H38 V10 C30,12 22,14 14,12 L0,16 Z" fill="#6e4a2a"/>
<path d="M4,6 C14,3 26,4 34,8 L30,14 C22,16 12,16 6,14 Z" fill="#7e5a38"/>
<ellipse cx="21" cy="22" rx="12" ry="10" fill="#e6b896"/>
<ellipse cx="7" cy="19" rx="5" ry="7" fill="#e89a6a"/><ellipse cx="7" cy="19" rx="2" ry="3" fill="#c8784a"/>
<path d="M26,12 L38,10 V24 L28,22 Z" fill="#b8d4ee"/>
<path d="M22,26 C28,22 34,24 38,28 V38 H18 Z" fill="#b86a2c"/>
<path d="M0,30 C6,31 12,33 16,38 H0 Z" fill="#a8cce8"/>
<path d="M12,36 C15,33 18,34 20,38 H12 Z" fill="#c8583a"/></g></svg>
<svg style="left:1215px;top:432px" width="38" height="38" viewBox="0 0 38 38"><defs><clipPath id="avc450"><circle cx="19" cy="19" r="19"/></clipPath></defs><g clip-path="url(#avc450)"><rect width="38" height="38" fill="#6e7a60"/>
<rect width="38" height="11" fill="#808a80"/>
<path d="M18,11 L38,10 V13 L22,13 Z" fill="#dcdcd0"/>
<path d="M0,12 C6,10 12,12 16,14 V30 H0 Z" fill="#607048"/>
<path d="M26,14 L38,14 V32 L28,32 Z" fill="#6a7e50"/>
<rect x="0" y="22" width="12" height="4" fill="#8a5a4a"/>
<ellipse cx="19.5" cy="25" rx="7" ry="9.5" fill="#cba588"/>
<path d="M12.5,20 C12.5,14 26.5,14 26.5,20 L26,18 C24,16 15,16 13,18 Z" fill="#3a3028"/>
<path d="M12.5,21.5 H26.5 V25 H12.5 Z" fill="#5a3a2a" opacity="0.8"/>
<path d="M6,38 C8,34 14,33 19.5,33 C25,33 31,34 33,38 Z" fill="#1e2436"/></g></svg>
<svg style="left:1215px;top:487px" width="38" height="38" viewBox="0 0 38 38"><g fill="none" stroke="#666" stroke-width="0.7"><path d="M9,16 L17,12 L24,14 L24,18 L30,18 L24,21 L15,24 L11,22 Z"/><path d="M14,18 L19,16.5 M16,20 L21,18.5 M11,22 L14,26 L26,22"/></g></svg>
<svg style="left:1215px;top:542px" width="38" height="38" viewBox="0 0 38 38"><defs><clipPath id="avc560"><circle cx="19" cy="19" r="19"/></clipPath></defs><g clip-path="url(#avc560)"><rect width="38" height="38" fill="#e6e8e4"/>
<circle cx="16" cy="3" r="2.8" fill="#303848"/><ellipse cx="16" cy="6.5" rx="2" ry="2.5" fill="#e8c8a0"/>
<path d="M12,9 L21,9 L22,20 L11,20 Z" fill="#d8b048"/><rect x="14.5" y="9" width="4" height="12" fill="#f0f0e8"/>
<path d="M8,6 L10,12" stroke="#b8d060" stroke-width="2"/>
<path d="M8,22 C10,20 20,20 22,22 L21,34 H10 Z" fill="#808080"/><rect x="9" y="21" width="12" height="2.5" fill="#5a5a5a"/>
<circle cx="5.5" cy="18" r="2.3" fill="#303848"/><path d="M2,21 L9,21 L9,29 L3,29 Z" fill="#5ca06a"/><rect x="4" y="29" width="4" height="5" fill="#d87a40"/>
<rect x="21" y="18" width="14" height="3" fill="#b04030"/>
<rect x="21" y="21" width="4" height="8" fill="#e0c030"/><rect x="25" y="21" width="4" height="8" fill="#e87a78"/><rect x="29" y="21" width="4" height="8" fill="#e0c030"/>
<rect x="21" y="29" width="4" height="7" fill="#3a6ac0"/><rect x="25" y="29" width="4" height="7" fill="#88b860"/><rect x="29" y="29" width="4" height="7" fill="#3a6ac0"/></g></svg>
<svg style="left:1215px;top:597px" width="38" height="38" viewBox="0 0 38 38"><defs><clipPath id="avc615"><circle cx="19" cy="19" r="19"/></clipPath></defs><g clip-path="url(#avc615)"><rect width="38" height="38" fill="#f8c410"/>
<path d="M0,12 C4,8 12,10 20,12 C26,14 30,20 29,27 C28,33 26,38 24,38 H0 Z" fill="#f2cfa0" stroke="#2a2018" stroke-width="0.7"/>
<path d="M8,7 C10,3 17,4 16,10 C12,13 7,11 8,7 Z" fill="#f2cfa0" stroke="#2a2018" stroke-width="0.7"/>
<path d="M25,10 C30,8 34,13 31,18 C27,19 24,14 25,10 Z" fill="#f2cfa0" stroke="#2a2018" stroke-width="0.7"/>
<ellipse cx="15" cy="22" rx="2" ry="1.5" fill="#111"/>
<path d="M12,18.5 L14,19.5 M20,20 L22,19.5" stroke="#222" stroke-width="0.8"/>
<ellipse cx="2" cy="19" rx="2.5" ry="2" fill="#f8a080"/><ellipse cx="23" cy="26" rx="2.5" ry="1.8" fill="#f8a080"/>
<path d="M9,38 C10,34 13,32 16,34 C19,35 22,36 24,38" fill="none" stroke="#2a2018" stroke-width="0.7"/></g></svg>
<svg style="left:1215px;top:652px" width="38" height="38" viewBox="0 0 38 38"><defs><clipPath id="avc670"><circle cx="19" cy="19" r="19"/></clipPath></defs><g clip-path="url(#avc670)"><rect width="38" height="38" fill="#6e3020"/>
<rect x="0" y="0" width="6" height="38" fill="#d8c8c0"/><rect x="6" y="0" width="6" height="38" fill="#4a2018"/>
<rect x="13" y="0" width="6" height="38" fill="#c8502a"/>
<rect x="26" y="0" width="6" height="30" fill="#b0481e"/><rect x="32" y="14" width="6" height="14" fill="#e8d8c8"/>
<path d="M15,38 C15,26 17,18 22,18 C28,18 29,26 28,38 Z" fill="#f4e8d4"/>
<circle cx="23" cy="11" r="4.5" fill="#f4d8b0"/><path d="M18,9 C19,4 27,4 28,9 L27,14 C26,10 20,8 18,9 Z" fill="#e8c070"/>
<path d="M10,15 L17,12 L20,20 L13,23 Z" fill="#f8f4f0"/>
<path d="M18,20 C22,18 26,22 24,30" stroke="#e89838" stroke-width="3" fill="none"/>
<path d="M26,30 L38,28 V38 H26 Z" fill="#e08828"/></g></svg>
<!-- RIGHT STRIP -->
<div class="a" style="left:1557px;top:0;width:13px;height:132px;background:#2b2e31"></div>
<div class="a" style="left:1558px;top:102px;width:12px;height:29px;background:#f7841f"></div>
<svg style="left:1558px;top:112px" width="12" height="19"><path d="M4,18 C4,12 8,8 12,8 V18 Z" fill="#fff"/></svg>

</body></html>
